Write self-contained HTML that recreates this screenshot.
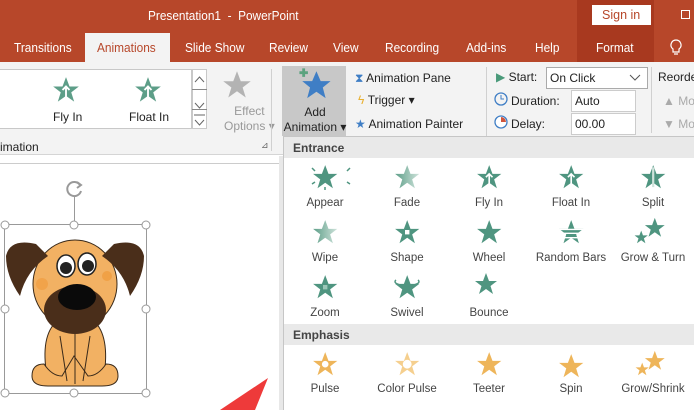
<!DOCTYPE html><html><head><meta charset="utf-8"><style>
*{margin:0;padding:0;box-sizing:border-box}
body{width:694px;height:410px;overflow:hidden;font-family:"Liberation Sans",sans-serif;background:#fff;position:relative;font-size:12px;color:#222}
.a{position:absolute}
.t{white-space:nowrap}
.tb{position:absolute;white-space:nowrap;top:41px;color:#fff;font-size:12.5px;transform:scaleX(.95);transform-origin:left top}
.lbl{position:absolute;width:82px;text-align:center;font-size:11.5px;color:#444}
</style></head><body>
<div class="a" style="left:0;top:0;width:694px;height:62px;background:#b7472a"></div>
<div class="a" style="left:577px;top:0;width:77px;height:62px;background:#a8391f"></div>
<div class="a t" style="left:148px;top:8px;color:#fff;font-size:13px;transform:scaleX(.91);transform-origin:left top">Presentation1 &nbsp;-&nbsp; PowerPoint</div>
<div class="a" style="left:592px;top:5px;width:59px;height:20px;background:#fff"></div>
<div class="a t" style="left:602px;top:8px;color:#b7472a;font-size:12.5px">Sign in</div>
<div class="a" style="left:681px;top:10px;width:9px;height:9px;border:1px solid #fff"></div>
<div class="a" style="left:85px;top:33px;width:85px;height:30px;background:#f3f3f3"></div>
<div class="tb" style="left:14px">Transitions</div>
<div class="tb" style="left:97px;color:#b7472a">Animations</div>
<div class="tb" style="left:185px">Slide Show</div>
<div class="tb" style="left:269px">Review</div>
<div class="tb" style="left:333px">View</div>
<div class="tb" style="left:385px">Recording</div>
<div class="tb" style="left:466px">Add-ins</div>
<div class="tb" style="left:535px">Help</div>
<div class="tb" style="left:596px">Format</div>
<svg class="a" style="left:670px;top:39px" width="12" height="17" viewBox="0 0 12 17"><path d="M6 1a5 5 0 0 0-3 9v3h6v-3a5 5 0 0 0-3-9zM4 15h4" stroke="#fff" fill="none" stroke-width="1.2"/></svg>
<div class="a" style="left:0;top:62px;width:694px;height:93px;background:#f3f3f3;border-bottom:1px solid #d5d5d5"></div>
<div class="a" style="left:0;top:69px;width:192px;height:60px;background:#fff;border:1px solid #c8c8c8;border-left:none"></div>
<svg class="a" style="left:52px;top:76px" width="28" height="28" viewBox="0 0 24 24"><polygon points="12,1 15,9 23,9 16.5,14 19,22 12,17 5,22 7.5,14 1,9 9,9" fill="#5d9e88"/><path d="M12 20V9M9 12l3-3 3 3" stroke="#fff" stroke-width="1.6" fill="none"/></svg>
<div class="a t" style="left:53px;top:110px;font-size:12px">Fly In</div>
<svg class="a" style="left:134px;top:76px" width="28" height="28" viewBox="0 0 24 24"><polygon points="12,1 15,9 23,9 16.5,14 19,22 12,17 5,22 7.5,14 1,9 9,9" fill="#5d9e88"/><path d="M12 20V9M9 12l3-3 3 3" stroke="#fff" stroke-width="1.6" fill="none"/></svg>
<div class="a t" style="left:129px;top:110px;font-size:12px">Float In</div>
<div class="a" style="left:192px;top:69px;width:15px;height:60px;background:#fff;border:1px solid #c8c8c8"></div>
<div class="a" style="left:192px;top:89px;width:15px;height:1px;background:#888"></div>
<div class="a" style="left:192px;top:109px;width:15px;height:1px;background:#888"></div>
<svg class="a" style="left:193px;top:70px" width="13" height="58"><path d="M2 12l4.5-5 4.5 5M2 33l4.5 5 4.5-5M2 50l4.5 5 4.5-5M1 45h11" stroke="#666" fill="none"/></svg>
<svg class="a" style="left:222px;top:70px" width="30" height="30" viewBox="0 0 24 24"><polygon points="12,1 15,9 23,9 16.5,14 19,22 12,17 5,22 7.5,14 1,9 9,9" fill="#b3b3b3"/></svg>
<div class="a t" style="left:224px;top:104px;color:#999;font-size:12px;text-align:center;line-height:15px">Effect<br>Options ▾</div>
<div class="a t" style="left:0;top:140px;font-size:12px">imation</div>
<div class="a t" style="left:261px;top:140px;font-size:9px;color:#666">⊿</div>
<div class="a" style="left:271px;top:69px;width:1px;height:82px;background:#d0d0d0"></div>
<div class="a" style="left:282px;top:66px;width:64px;height:70px;background:#c8c8c8"></div>
<svg class="a" style="left:298px;top:67px" width="34" height="34" viewBox="0 0 24 24"><polygon points="13,3 16,10 23,10 17.5,14.5 19.5,22 13,17.5 6.5,22 8.5,14.5 3,10 10,10" fill="#3f7ec5"/><path d="M4 1v6M1 4h6" stroke="#5ba37f" stroke-width="2"/></svg>
<div class="a t" style="left:283px;top:105px;width:64px;text-align:center;font-size:12px;line-height:15px">Add<br>Animation ▾</div>
<div class="a t" style="left:355px;top:71px;font-size:12px"><span style="color:#3f7ec5">⧗</span> Animation Pane</div>
<div class="a t" style="left:358px;top:93px;font-size:12px"><span style="color:#e8b030">ϟ</span> Trigger ▾</div>
<div class="a t" style="left:355px;top:117px;font-size:12px"><span style="color:#3f7ec5">★</span> Animation Painter</div>
<div class="a" style="left:486px;top:67px;width:1px;height:70px;background:#d0d0d0"></div>
<div class="a t" style="left:496px;top:70px;font-size:12px"><span style="color:#4a9a7a">▶</span> Start:</div>
<div class="a" style="left:546px;top:67px;width:102px;height:22px;background:#fff;border:1px solid #aaa"></div>
<div class="a t" style="left:550px;top:71px;font-size:12px">On Click</div>
<svg class="a" style="left:629px;top:74px" width="12" height="8"><path d="M1 1l5 5 5-5" stroke="#555" fill="none"/></svg>
<svg class="a" style="left:494px;top:92px" width="14" height="14"><circle cx="7" cy="7" r="6" fill="none" stroke="#3f7ec5" stroke-width="1.3"/><path d="M7 3v4h3" stroke="#3f7ec5" fill="none"/></svg>
<div class="a t" style="left:511px;top:94px;font-size:12px">Duration:</div>
<div class="a" style="left:571px;top:90px;width:65px;height:22px;background:#fff;border:1px solid #ccc"></div>
<div class="a t" style="left:575px;top:94px;font-size:12px">Auto</div>
<svg class="a" style="left:494px;top:115px" width="14" height="14"><circle cx="7" cy="7" r="6" fill="#fff" stroke="#3f7ec5" stroke-width="1.3"/><path d="M7 7V2a5 5 0 0 1 5 5z" fill="#d0553c"/></svg>
<div class="a t" style="left:511px;top:117px;font-size:12px">Delay:</div>
<div class="a" style="left:571px;top:113px;width:65px;height:22px;background:#fff;border:1px solid #ccc"></div>
<div class="a t" style="left:575px;top:117px;font-size:12px">00.00</div>
<div class="a" style="left:651px;top:67px;width:1px;height:66px;background:#d0d0d0"></div>
<div class="a t" style="left:658px;top:70px;font-size:12px">Reorde</div>
<div class="a t" style="left:663px;top:94px;font-size:12px;color:#aaa">▲ Mo</div>
<div class="a t" style="left:663px;top:117px;font-size:12px;color:#aaa">▼ Mo</div>
<div class="a" style="left:0;top:156px;width:283px;height:254px;background:#fff"></div>
<div class="a" style="left:0;top:163px;width:283px;height:1px;background:#ccc"></div>
<div class="a" style="left:279px;top:156px;width:4px;height:254px;background:#e8e8e8"></div>
<svg class="a" style="left:65px;top:179px" width="20" height="20"><path d="M15 6a7 7 0 1 0 1 6" stroke="#999" stroke-width="2" fill="none"/><path d="M12 3l4 3-4 3" stroke="#999" stroke-width="2" fill="none"/></svg>
<div class="a" style="left:74px;top:197px;width:1px;height:28px;background:#999"></div>
<div class="a" style="left:4px;top:224px;width:143px;height:170px;border:1px solid #999"></div>
<svg class="a" style="left:2px;top:226px" width="146" height="168" viewBox="0 0 146 168">
<path d="M45 150 Q38 110 55 95 L92 95 Q108 110 102 150Z" fill="#f2b163" stroke="#3a2a1a"/>
<path d="M30 150 Q30 138 42 138 Q50 150 60 150 L72 130 L86 150 Q96 150 104 138 Q116 138 116 150 Q116 160 100 160 L46 160 Q30 160 30 150Z" fill="#f2b163" stroke="#3a2a1a"/>
<path d="M73 100 L73 158M58 110 L65 155M88 110 L81 155" stroke="#3a2a1a" fill="none"/>
<ellipse cx="73" cy="58" rx="42" ry="44" fill="#f2b163" stroke="#3a2a1a"/>
<path d="M34 18 Q8 12 4 30 Q4 50 18 70 Q24 45 46 30Z" fill="#4a2e1a"/>
<path d="M112 18 Q138 12 142 30 Q142 50 128 70 Q122 45 100 30Z" fill="#4a2e1a"/>
<ellipse cx="73" cy="84" rx="31" ry="24" fill="#4a2e1a"/>
<ellipse cx="75" cy="71" rx="19" ry="13" fill="#0a0a0a"/>
<ellipse cx="64" cy="40" rx="9" ry="11" fill="#fff" stroke="#222" stroke-width="1.5"/>
<ellipse cx="85" cy="38" rx="9" ry="11" fill="#fff" stroke="#222" stroke-width="1.5"/>
<circle cx="64" cy="42" r="6" fill="#222"/><circle cx="86" cy="40" r="6" fill="#222"/>
<circle cx="40" cy="58" r="6" fill="#f09a3a" opacity=".6"/><circle cx="105" cy="50" r="5" fill="#f09a3a" opacity=".7"/>
</svg>
<svg class="a" style="left:0;top:220px" width="160" height="180"><g fill="#fff" stroke="#999"><circle cx="5" cy="5" r="4"/><circle cx="74" cy="5" r="4"/><circle cx="146" cy="5" r="4"/><circle cx="5" cy="89" r="4"/><circle cx="146" cy="89" r="4"/><circle cx="5" cy="173" r="4"/><circle cx="74" cy="173" r="4"/><circle cx="146" cy="173" r="4"/></g></svg>
<svg class="a" style="left:215px;top:372px" width="60" height="38"><polygon points="5,38 53,6 40,38" fill="#ee3a3a"/></svg>
<div class="a" style="left:283px;top:136px;width:411px;height:274px;background:#fff;border-left:1px solid #c6c6c6;border-top:1px solid #c6c6c6"></div>
<div class="a" style="left:284px;top:137px;width:410px;height:21px;background:#e9e9e9"></div>
<div class="a t" style="left:293px;top:141px;font-size:12px;font-weight:bold;color:#444">Entrance</div>
<div class="a" style="left:284px;top:324px;width:410px;height:21px;background:#e9e9e9"></div>
<div class="a t" style="left:293px;top:328px;font-size:12px;font-weight:bold;color:#444">Emphasis</div>
<svg class="a" style="left:284px;top:160px" width="410" height="170" viewBox="0 0 410 170">
<defs><polygon id="s" points="12,1 15,9 23,9 16.5,14 19,22 12,17 5,22 7.5,14 1,9 9,9"/>
<linearGradient id="fd" x1="0" x2="1"><stop offset="0" stop-color="#5d9e88"/><stop offset="1" stop-color="#cfe3db"/></linearGradient></defs>
<g transform="translate(28,4) scale(1.1)"><use href="#s" fill="#4f9580"/></g>
<g stroke="#4f9580" stroke-width="1.5"><path d="M28 8l3 3M66 8l-3 3M28 24l3-2M66 24l-3-2M41 30v-3"/></g>
<g transform="translate(110,4) scale(1.1)"><use href="#s" fill="url(#fd)"/></g>
<g transform="translate(192,4) scale(1.1)"><use href="#s" fill="#4f9580"/><path d="M12 21V9M9 12l3-3 3 3" stroke="#fff" stroke-width="1.5" fill="none"/></g>
<g transform="translate(274,4) scale(1.1)"><use href="#s" fill="#4f9580"/><path d="M12 18V9M9 12l3-3 3 3" stroke="#fff" stroke-width="1.5" fill="none"/></g>
<g transform="translate(356,4) scale(1.1)"><use href="#s" fill="#4f9580"/><rect x="11" y="3" width="2" height="18" fill="#cfe3db"/></g>
<g transform="translate(28,59) scale(1.1)"><use href="#s" fill="url(#fd)"/></g>
<g transform="translate(110,59) scale(1.1)"><use href="#s" fill="#4f9580"/><rect x="10" y="10" width="4" height="4" fill="#fff"/></g>
<g transform="translate(192,59) scale(1.1)"><use href="#s" fill="#4f9580"/></g>
<g transform="translate(274,59) scale(1.1)"><use href="#s" fill="#4f9580"/><path d="M1 9.5h22M4 13h16M5 17h14" stroke="#fff" stroke-width="1.2"/></g>
<g transform="translate(360,57) scale(0.9)"><use href="#s" fill="#4f9580"/></g><g transform="translate(350,70) scale(0.6)"><use href="#s" fill="#4f9580"/></g>
<g transform="translate(28,114) scale(1.1)"><use href="#s" fill="#4f9580"/><rect x="10" y="10" width="4" height="4" fill="#9cc7b8"/></g>
<g transform="translate(110,114) scale(1.1)"><use href="#s" fill="#4f9580"/></g>
<path d="M112 120a12 4 0 1 0 22 0" stroke="#4f9580" stroke-width="1.5" fill="none"/>
<g transform="translate(190,112) scale(1.0)"><use href="#s" fill="#4f9580"/></g>
</svg>
<div class="lbl" style="left:284px;top:197px">Appear</div>
<div class="lbl" style="left:366px;top:197px">Fade</div>
<div class="lbl" style="left:448px;top:197px">Fly In</div>
<div class="lbl" style="left:530px;top:197px">Float In</div>
<div class="lbl" style="left:612px;top:197px">Split</div>
<div class="lbl" style="left:284px;top:252px">Wipe</div>
<div class="lbl" style="left:366px;top:252px">Shape</div>
<div class="lbl" style="left:448px;top:252px">Wheel</div>
<div class="lbl" style="left:530px;top:252px">Random Bars</div>
<div class="lbl" style="left:612px;top:252px">Grow &amp; Turn</div>
<div class="lbl" style="left:284px;top:307px">Zoom</div>
<div class="lbl" style="left:366px;top:307px">Swivel</div>
<div class="lbl" style="left:448px;top:307px">Bounce</div>
<svg class="a" style="left:284px;top:348px" width="410" height="32" viewBox="0 0 410 32">
<defs><polygon id="e" points="12,1 15,9 23,9 16.5,14 19,22 12,17 5,22 7.5,14 1,9 9,9"/></defs>
<g transform="translate(28,3) scale(1.1)"><use href="#e" fill="#eeb55a"/><circle cx="12" cy="12" r="3" fill="#fff"/></g>
<g transform="translate(110,3) scale(1.1)"><use href="#e" fill="#f5cf8e"/><circle cx="12" cy="12" r="4" fill="#fff"/></g>
<g transform="translate(192,3) scale(1.1)"><use href="#e" fill="#eeb55a"/></g>
<g transform="translate(274,5) scale(1.1)"><use href="#e" fill="#eeb55a"/></g>
<g transform="translate(360,2) scale(0.9)"><use href="#e" fill="#eeb55a"/></g><g transform="translate(351,14) scale(0.6)"><use href="#e" fill="#eeb55a"/></g>
</svg>
<div class="lbl" style="left:284px;top:383px">Pulse</div>
<div class="lbl" style="left:366px;top:383px">Color Pulse</div>
<div class="lbl" style="left:448px;top:383px">Teeter</div>
<div class="lbl" style="left:530px;top:383px">Spin</div>
<div class="lbl" style="left:612px;top:383px">Grow/Shrink</div>
</body></html>
